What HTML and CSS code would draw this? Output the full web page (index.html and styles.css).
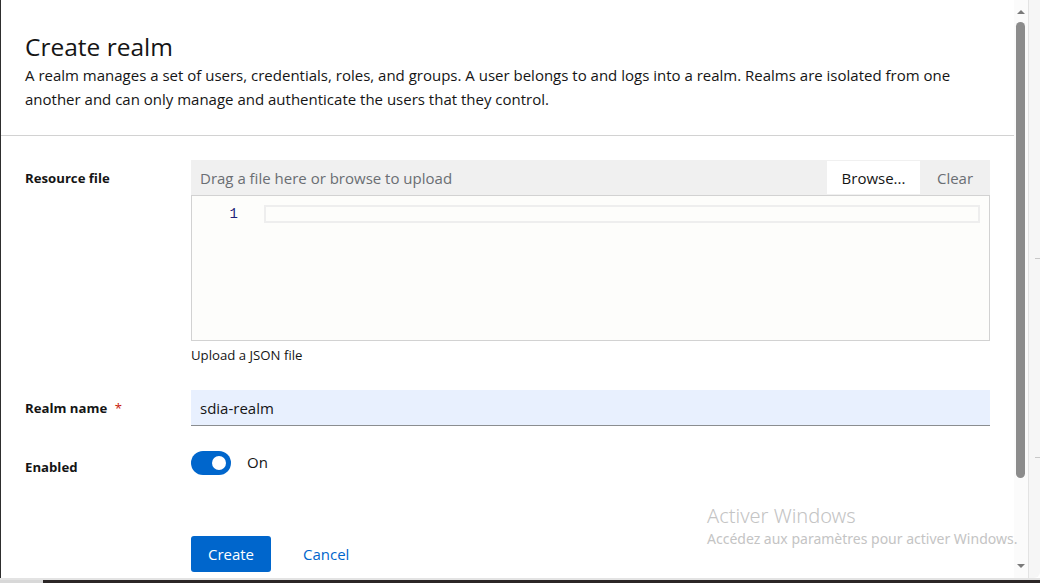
FILE: index.html
```html
<!DOCTYPE html>
<html lang="en">
<head>
<meta charset="utf-8">
<title>Create realm</title>
<link rel="stylesheet" href="styles.css">
</head>
<body>
<div class="window">
  <div class="frame">
    <main class="page">
      <header class="page-header">
        <h1 class="title">Create realm</h1>
        <p class="desc">A realm manages a set of users, credentials, roles, and groups. A user belongs to and logs into a realm. Realms are isolated from one another and can only manage and authenticate the users that they control.</p>
      </header>
      <form class="form">
        <div class="row">
          <label class="label">Resource file</label>
          <div class="control">
            <div class="upload">
              <div class="upload-bar">
                <span class="upload-placeholder">Drag a file here or browse to upload</span>
                <span class="btn-browse">Browse...</span>
                <span class="btn-clear">Clear</span>
              </div>
              <div class="editor">
                <div class="gutter"><span class="line-no">1</span></div>
                <div class="code"><div class="current-line"></div></div>
              </div>
            </div>
            <div class="helper">Upload a JSON file</div>
          </div>
        </div>
        <div class="row row-name">
          <label class="label">Realm name <span class="req">*</span></label>
          <div class="control">
            <div class="input">sdia-realm</div>
          </div>
        </div>
        <div class="row row-switch">
          <label class="label label-switch">Enabled</label>
          <div class="control switch-wrap">
            <span class="switch"><span class="knob"></span></span>
            <span class="switch-text">On</span>
          </div>
        </div>
        <div class="actions">
          <span class="btn-primary">Create</span>
          <span class="btn-link">Cancel</span>
        </div>
      </form>
      <div class="watermark">
        <div class="wm-title">Activer Windows</div>
        <div class="wm-sub">Accédez aux paramètres pour activer Windows.</div>
      </div>
    </main>
    <div class="scrollbar">
      <span class="arrow-up"></span>
      <div class="thumb"></div>
      <span class="arrow-down"></span>
    </div>
    <div class="side">
      <span class="tick t1"></span>
      <span class="tick t2"></span>
    </div>
  </div>
  <div class="taskbar"><span class="tb-left"></span><span class="tb-right"></span></div>
</div>
</body>
</html>
```

FILE: styles.css
```css
* { box-sizing: border-box; }
html, body { margin: 0; padding: 0; }
body {
  width: 1040px;
  height: 583px;
  overflow: hidden;
  background: #fff;
  font-family: "Open Sans", "Noto Sans", sans-serif;
  color: #151515;
}
.window { display: flex; flex-direction: column; height: 583px; }
.frame {
  display: flex;
  height: 578px;
  border-bottom-right-radius: 6px;
  overflow: hidden;
  background: #fff;
}
.page {
  position: relative;
  width: 1014px;
  border-left: 1px solid #2e2e2e;
  display: flex;
  flex-direction: column;
}
.page-header {
  padding: 31px 24px 24px 24px;
  border-bottom: 1px solid #d2d2d2;
}
.title {
  margin: 0;
  font-size: 24.5px;
  font-weight: 400;
  line-height: 32px;
  color: #151515;
}
.desc {
  margin: 0;
  font-size: 15px;
  line-height: 24px;
  color: #151515;
}
.form {
  padding: 24px 24px 0 24px;
  display: flex;
  flex-direction: column;
  gap: 24px;
}
.row { display: flex; }
.label {
  width: 166px;
  flex: none;
  padding-top: 8px;
  font-size: 13.2px;
  font-weight: 700;
  line-height: 21px;
}
.req { color: #c9190b; font-weight: 400; margin-left: 4px; }
.control { flex: 1; min-width: 0; }
.upload-bar {
  display: flex;
  align-items: stretch;
  height: 35px;
  background: #f0f0f0;
}
.upload-placeholder {
  flex: 1;
  padding-left: 9px;
  font-size: 15px;
  line-height: 36px;
  color: #6a6e73;
}
.btn-browse {
  margin: 1px 0;
  width: 93px;
  background: #fff;
  font-size: 15px;
  line-height: 34px;
  text-align: center;
  color: #151515;
}
.btn-clear {
  width: 70px;
  font-size: 15px;
  line-height: 36px;
  text-align: center;
  color: #6a6e73;
}
.editor {
  display: flex;
  height: 146px;
  border: 1px solid #d2d2d2;
  background: #fdfdfb;
  padding-top: 8px;
}
.gutter {
  width: 72px;
  flex: none;
  padding-right: 26px;
  text-align: right;
  line-height: 16px;
}
.line-no {
  font-family: "Liberation Mono", "DejaVu Sans Mono", monospace;
  font-size: 14px;
  line-height: 16px;
  color: #1f1f7a;
}
.code { flex: 1; padding-right: 9px; }
.current-line {
  height: 18px;
  border: 2px solid #eeeeee;
  margin-top: 1px;
}
.helper {
  margin-top: 4px;
  font-size: 13.2px;
  line-height: 20px;
  color: #151515;
}
.row-name { margin-top: 1px; }
.input {
  height: 36px;
  background: #e8f0fe;
  border-bottom: 1px solid #8a8d90;
  padding-left: 9px;
  font-size: 15px;
  line-height: 36px;
  color: #151515;
}
.label-switch { padding-top: 7px; }
.switch-wrap { display: flex; align-items: flex-start; padding-top: 1px; }
.switch {
  position: relative;
  width: 40px;
  height: 24px;
  border-radius: 12px;
  background: #0066cc;
  flex: none;
}
.knob {
  position: absolute;
  right: 5px;
  top: 5px;
  width: 14px;
  height: 14px;
  border-radius: 50%;
  background: #fff;
}
.switch-text {
  margin-left: 16px;
  font-size: 15px;
  line-height: 22px;
}
.actions {
  display: flex;
  align-items: center;
  gap: 16px;
  margin-top: 34px;
  padding-left: 166px;
}
.btn-primary {
  display: inline-block;
  width: 80px;
  height: 36px;
  border-radius: 3px;
  background: #0066cc;
  color: #fff;
  font-size: 15px;
  line-height: 36px;
  text-align: center;
}
.btn-link {
  padding: 0 16px;
  color: #0066cc;
  font-size: 15px;
  line-height: 36px;
}
.watermark {
  position: absolute;
  z-index: 2;
  left: 706px;
  top: 503px;
  color: #c4c4c4;
  white-space: nowrap;
  font-family: "Noto Sans", "Open Sans", sans-serif;
}
.wm-title { font-size: 20px; line-height: 26px; font-weight: 300; }
.wm-sub { font-size: 14px; line-height: 20px; }
.scrollbar {
  position: relative;
  width: 15px;
  flex: none;
  background: #fbfbfb;
  border-right: 1px solid #e3e3e3;
}
.arrow-up {
  position: absolute;
  left: 3px;
  top: 10px;
  border-left: 4px solid transparent;
  border-right: 4px solid transparent;
  border-bottom: 4px solid #7a7a7a;
}
.arrow-down {
  position: absolute;
  left: 3px;
  bottom: 10px;
  border-left: 4px solid transparent;
  border-right: 4px solid transparent;
  border-top: 4px solid #7a7a7a;
}
.thumb {
  position: absolute;
  left: 2px;
  top: 22px;
  width: 9px;
  height: 456px;
  border-radius: 5px;
  background: #8c8c8c;
}
.side {
  position: relative;
  flex: 1;
  background: #f6f6f6;
}
.tick {
  position: absolute;
  left: 6px;
  width: 5px;
  height: 1px;
  background: #c8c8c8;
}
.t1 { top: 258px; }
.t2 { top: 457px; }
.taskbar {
  display: flex;
  height: 5px;
  border-top: 2px solid #e3e3e3;
}
.tb-left { width: 43px; background: #d8d8d8; }
.tb-right { flex: 1; background: #2b2626; }
```
